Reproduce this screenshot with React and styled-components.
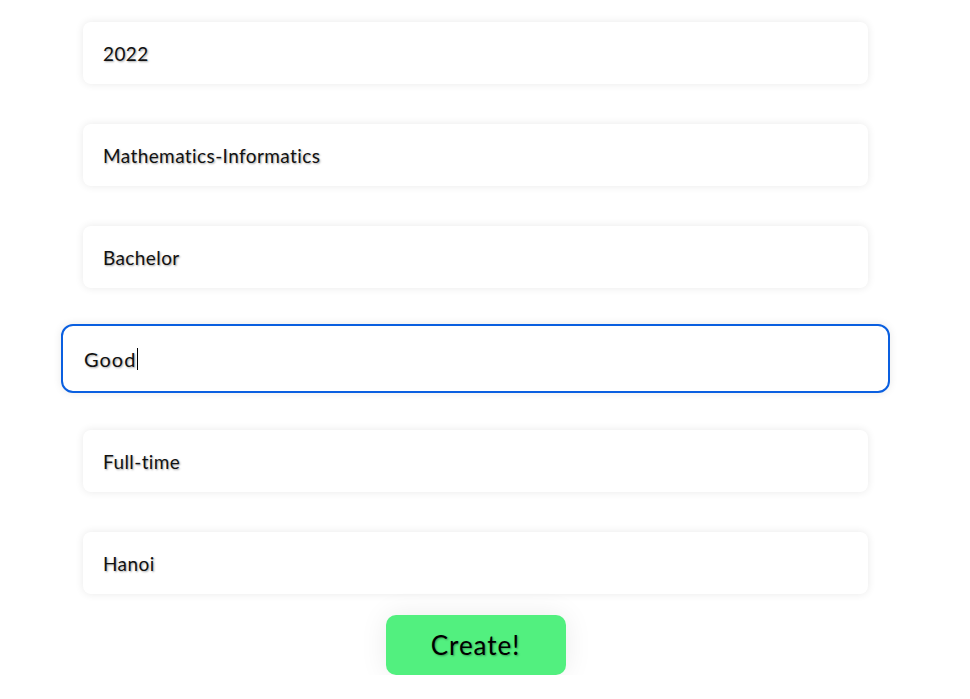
import React from "react";
import styled, { createGlobalStyle, css } from "styled-components";

const GlobalStyle = createGlobalStyle`
  html, body {
    margin: 0;
    padding: 0;
    background: #ffffff;
    font-family: "Century Gothic", Lato, "Open Sans", sans-serif;
  }
`;

const Form = styled.form`
  width: 785px;
  margin-left: 83px;
  padding-top: 22px;
  display: flex;
  flex-direction: column;
  align-items: stretch;
  gap: 40px;
`;

const boxBase = css`
  box-sizing: border-box;
  background: #ffffff;
  box-shadow: 0 0 8px rgba(0, 0, 0, 0.09);
  outline: none;
  font-family: inherit;
  color: #111;
  text-shadow: 1px 1px 2px rgba(0, 0, 0, 0.35);
`;

const Field = styled.input`
  ${boxBase}
  height: 62px;
  padding: 0 20px;
  border: none;
  border-radius: 8px;
  font-size: 19px;
  letter-spacing: 0.4px;
`;

const ActiveField = styled.div`
  ${boxBase}
  height: 69px;
  margin: -4px -22px -3px -22px;
  padding: 0 21px;
  border: 2px solid #0a5fe0;
  border-radius: 12px;
  display: flex;
  align-items: center;
  font-size: 20px;
  letter-spacing: 1px;
`;

const Caret = styled.span`
  display: inline-block;
  width: 1px;
  height: 22px;
  margin-left: 1px;
  background: #000;
`;

const Actions = styled.div`
  display: flex;
  justify-content: center;
  margin-top: -19px;
`;

const Button = styled.button`
  width: 180px;
  height: 60px;
  border: none;
  border-radius: 10px;
  background: #52f07f;
  box-shadow: 0 0 28px rgba(0, 0, 0, 0.08);
  font-family: inherit;
  font-size: 26px;
  letter-spacing: 1px;
  color: #000;
  text-shadow: 1px 1px 2px rgba(0, 0, 0, 0.35);
  cursor: pointer;
`;

const values = [
  "2022",
  "Mathematics-Informatics",
  "Bachelor",
  "Good",
  "Full-time",
  "Hanoi",
];

export default function App() {
  return (
    <>
      <GlobalStyle />
      <Form onSubmit={(e) => e.preventDefault()}>
        {values.map((v, i) =>
          v === "Good" ? (
            <ActiveField key={i}>
              {v}
              <Caret />
            </ActiveField>
          ) : (
            <Field key={i} defaultValue={v} readOnly />
          )
        )}
        <Actions>
          <Button type="submit">Create!</Button>
        </Actions>
      </Form>
    </>
  );
}
